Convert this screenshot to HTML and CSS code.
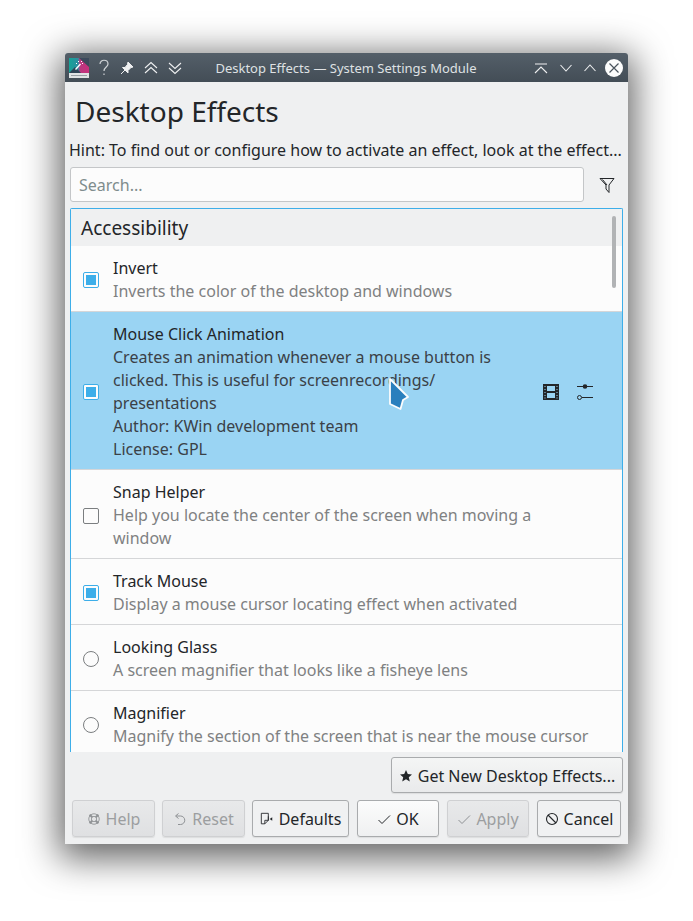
FILE: index.html
```html
<!DOCTYPE html>
<html lang="en">
<head>
<meta charset="utf-8">
<title>Desktop Effects — System Settings Module</title>
<link rel="stylesheet" href="styles.css">
</head>
<body>
<div class="window">
  <header class="titlebar">
    <svg class="app-icon" width="20" height="20" viewBox="0 0 20 20">
      <defs><linearGradient id="ag" x1="0" y1="0" x2="1" y2="0"><stop offset="0" stop-color="#17a397"/><stop offset=".45" stop-color="#2a8fa0"/><stop offset=".55" stop-color="#b9377f"/><stop offset="1" stop-color="#c9307c"/></linearGradient></defs>
      <rect width="20" height="15" fill="url(#ag)"/>
      <path d="M10 0H20V9Z" fill="#3c4a5c"/>
      <path d="M0 15L6 9L12 15Z" fill="#2f4456"/>
      <rect y="15" width="20" height="5" fill="#e1e3e5"/>
      <rect x="2" y="17" width="16" height="1" fill="#9aa0a6"/>
      <path d="M6 11L11 5.500L12 6.500L7 12Z" fill="#fff"/>
      <path d="M9 3h1v1H9zM12 3h1v1h-1zM13 5h1v1h-1zM7 5h1v1H7z" fill="#fff"/>
    </svg>
    <div class="tb-left">
      <svg class="ic-help" width="16" height="18" viewBox="0 0 16 18"><path d="M4 5c0-5 8-5 8 0 0 3-4 3-4 7M8 14.500v1.500" fill="none" stroke="#cfd3d6" stroke-width="1.200"/></svg>
      <svg width="14" height="14" viewBox="0 0 14 14"><path d="M8 1l5 5-2 .5-3 3 0 2.500L2.500 6.500 5 6.500l2.500-3zM5 9l-4 4" fill="#eff0f1" stroke="#eff0f1" stroke-width="1"/></svg>
      <svg width="14" height="14" viewBox="0 0 14 14"><path d="M1 7l6-5.500L13 7M1 12l6-5.500 6 5.500" fill="none" stroke="#eff0f1" stroke-width="1.100"/></svg>
      <svg width="14" height="14" viewBox="0 0 14 14"><path d="M1 2l6 5.500L13 2M1 7l6 5.500L13 7" fill="none" stroke="#eff0f1" stroke-width="1.100"/></svg>
    </div>
    <div class="tb-title">Desktop Effects — System Settings Module</div>
    <div class="tb-right">
      <svg width="14" height="14" viewBox="0 0 14 14"><path d="M1 3h12M1 12l6-6 6 6" fill="none" stroke="#eff0f1" stroke-width="1.100"/></svg>
      <svg width="14" height="14" viewBox="0 0 14 14"><path d="M1.500 4l5.500 6 5.500-6" fill="none" stroke="#eff0f1" stroke-width="1.100"/></svg>
      <svg width="14" height="14" viewBox="0 0 14 14"><path d="M1.500 10l5.500-6 5.500 6" fill="none" stroke="#eff0f1" stroke-width="1.100"/></svg>
      <svg class="ic-close" width="18" height="18" viewBox="0 0 18 18"><circle cx="9" cy="9" r="9" fill="#fcfcfc"/><path d="M4.500 4.500l9 9M13.500 4.500l-9 9" stroke="#4a545d" stroke-width="1.200"/></svg>
    </div>
  </header>

  <main class="content">
    <h1 class="heading">Desktop Effects</h1>
    <p class="hint">Hint: To find out or configure how to activate an effect, look at the effect...</p>
    <div class="search-row">
      <div class="search">Search...</div>
      <svg class="filter" width="16" height="16" viewBox="0 0 16 16"><path d="M1 1.500h14L10 8v7.500L7 12V8z M3.500 2.500L8 8" fill="none" stroke="#232629" stroke-width="1"/></svg>
    </div>

    <div class="list">
      <div class="scrollbar"></div>
      <div class="section">Accessibility</div>

      <div class="row">
        <span class="check on"></span>
        <div class="text"><div class="name">Invert</div><div class="desc">Inverts the color of the desktop and windows</div></div>
      </div>

      <div class="row selected">
        <span class="check on"></span>
        <div class="text">
          <div class="name">Mouse Click Animation</div>
          <div class="desc">Creates an animation whenever a mouse button is<br>clicked. This is useful for screenrecordings/<br>presentations<br>Author: KWin development team<br>License: GPL</div>
        </div>
        <div class="row-actions">
          <svg width="16" height="16" viewBox="0 0 16 16"><rect x="0" y="0" width="16" height="16" fill="#232629"/><rect x="4" y="2" width="8" height="5" fill="#9ad4f3"/><rect x="4" y="9" width="8" height="5" fill="#9ad4f3"/><path d="M1.500 2h1v1h-1zM1.500 5h1v1h-1zM1.500 8h1v1h-1zM1.500 11h1v1h-1zM1.500 13.500h1v1h-1zM13.500 2h1v1h-1zM13.500 5h1v1h-1zM13.500 8h1v1h-1zM13.500 11h1v1h-1zM13.500 13.500h1v1h-1z" fill="#9ad4f3"/></svg>
          <svg width="16" height="16" viewBox="0 0 16 16"><path d="M0 2.500h16M5 13.500h11" stroke="#232629"/><circle cx="8" cy="2.500" r="2.300" fill="#232629"/><circle cx="2.500" cy="13.500" r="2" fill="none" stroke="#232629"/></svg>
        </div>
      </div>

      <div class="row">
        <span class="check"></span>
        <div class="text"><div class="name">Snap Helper</div><div class="desc">Help you locate the center of the screen when moving a<br>window</div></div>
      </div>

      <div class="row">
        <span class="check on"></span>
        <div class="text"><div class="name">Track Mouse</div><div class="desc">Display a mouse cursor locating effect when activated</div></div>
      </div>

      <div class="row">
        <span class="radio"></span>
        <div class="text"><div class="name">Looking Glass</div><div class="desc">A screen magnifier that looks like a fisheye lens</div></div>
      </div>

      <div class="row">
        <span class="radio"></span>
        <div class="text"><div class="name">Magnifier</div><div class="desc">Magnify the section of the screen that is near the mouse cursor</div></div>
      </div>
    </div>

    <div class="get-new-row">
      <button class="btn get-new"><svg width="14" height="14" viewBox="0 0 14 14"><path d="M7 1l1.800 4 4.200.4-3.200 2.800 1 4.300L7 10.300 3.200 12.500l1-4.300L1 5.400 5.200 5z" fill="#232629"/></svg>Get New Desktop Effects...</button>
    </div>

    <div class="dialog-buttons">
      <button class="btn off b-help"><svg width="14" height="14" viewBox="0 0 16 16"><circle cx="8" cy="8" r="6" fill="none" stroke="#8e9194"/><circle cx="8" cy="8" r="3" fill="none" stroke="#8e9194"/><path d="M3 3l3 3M13 3l-3 3M3 13l3-3M13 13l-3-3" stroke="#8e9194" stroke-width="2.400"/></svg>Help</button>
      <button class="btn off b-reset"><svg width="14" height="14" viewBox="0 0 14 14"><path d="M5.500 1.500L2.500 4l3 2.500M3 4h4.500a3.800 3.800 0 0 1 0 8.500H5" fill="none" stroke="#8e9194"/></svg>Reset</button>
      <button class="btn b-defaults"><svg width="14" height="14" viewBox="0 0 16 16"><path d="M1.500 1.500h8v8l-4 4h-4zM9.500 5v4.500M5.500 13.500v-4h4" fill="none" stroke="#232629"/><path d="M11 8l3-2v4z" fill="#232629"/></svg>Defaults</button>
      <button class="btn b-ok"><svg width="14" height="14" viewBox="0 0 14 14"><path d="M1.500 8l3.500 3.500 8-8" fill="none" stroke="#232629"/></svg>OK</button>
      <button class="btn off b-apply"><svg width="14" height="14" viewBox="0 0 14 14"><path d="M1.500 8l3.500 3.500 8-8" fill="none" stroke="#8e9194"/></svg>Apply</button>
      <button class="btn b-cancel"><svg width="14" height="14" viewBox="0 0 14 14"><circle cx="7" cy="7" r="5.500" fill="none" stroke="#232629" stroke-width="1.100"/><path d="M3 3l8 8" stroke="#232629" stroke-width="1.100"/></svg>Cancel</button>
    </div>
  </main>

  <svg class="cursor" width="24" height="38" viewBox="0 0 24 38">
    <path d="M2 3L20 21L15 24L12.500 33L2 28Z" fill="#2a7fbd" stroke="#fcfcfc" stroke-width="1.800" stroke-linejoin="round"/>
  </svg>
</div>
</body>
</html>
```

FILE: styles.css
```css
* { box-sizing: border-box; }
html, body { margin: 0; padding: 0; background: #fff; }
body {
  width: 693px;
  height: 921px;
  padding: 53px 65px 77px;
  overflow: hidden;
  font-family: "Noto Sans", sans-serif;
  font-size: 16px;
  color: #232629;
}
.window {
  position: relative;
  width: 563px;
  height: 791px;
  display: flex;
  flex-direction: column;
  background: #eff0f1;
  border-radius: 3px 3px 0 0;
  box-shadow: 0 8px 36px 6px rgba(0,0,0,.62);
}
.titlebar {
  height: 29px;
  flex: none;
  display: flex;
  align-items: center;
  padding: 0 5px 0 4px;
  background: linear-gradient(#545f69, #434d56);
  border-radius: 3px 3px 0 0;
  color: #dfe1e3;
  font-size: 13px;
}
.app-icon { flex: none; }
.tb-left { display: flex; align-items: center; gap: 10px; margin-left: 7px; }
.ic-help { margin-right: -2px; }
.tb-title { flex: 1; text-align: center; white-space: nowrap; margin-left: -22px; }
.tb-right { display: flex; align-items: center; gap: 10px; margin-left: 2px; }
.tb-right svg:nth-child(1) { margin-right: 1px; }
.ic-close { margin-left: -2px; }
.content { flex: 1; display: flex; flex-direction: column; min-height: 0; padding: 0 5px 0 5px; }
.heading { margin: 11px 0 0 5px; font-size: 28px; font-weight: 400; line-height: 37px; height: 39px; }
.hint { margin: 0 0 0 -1px; font-size: 16px; line-height: 20px; white-space: nowrap; height: 35px; padding-top: 8px; }
.search-row { display: flex; align-items: center; height: 35px; flex: none; }
.search {
  width: 514px; height: 35px; flex: none;
  border: 1px solid #c4c6c8; border-radius: 3px; background: #fcfcfc;
  color: #7f8c8d; padding: 1px 8px 0; line-height: 33px; font-size: 16px;
}
.filter { margin-left: 15px; }
.list {
  position: relative;
  margin-top: 6px;
  width: 553px;
  height: 544px;
  flex: none;
  border: 1px solid #3daee9;
  border-bottom: 0;
  border-radius: 2px 2px 0 0;
  background: #fcfcfc;
  overflow: hidden;
}
.scrollbar { position: absolute; top: 7px; right: 6px; width: 4px; height: 72px; border-radius: 2px; background: #b1b3b5; z-index: 2; }
.section { height: 37px; background: #eff0f1; padding-left: 10px; font-size: 19px; line-height: 38px; }
.row {
  display: flex; align-items: center;
  padding: 11px 0 8px 12px;
  border-bottom: 1px solid #d5d6d8;
}
.row.selected { background: #9ad4f3; }
.check, .radio { flex: none; width: 16px; height: 16px; border: 1px solid #7b7e80; background: #fcfcfc; }
.check { border-radius: 2px; position: relative; }
.check.on { border-color: #3daee9; }
.check.on::after { content: ""; position: absolute; inset: 2px; background: #3daee9; }
.radio { border-radius: 50%; }
.text { margin-left: 14px; flex: 1; min-width: 0; font-size: 16px; line-height: 23px; }
.name { color: #232629; }
.desc { color: #7f8182; white-space: nowrap; }
.selected .desc { color: #3a4147; }
.row-actions { display: flex; gap: 18px; margin-right: 29px; align-items: center; }
.get-new-row { display: flex; justify-content: flex-end; margin-top: 5px; padding-right: 0; }
.btn {
  font: inherit; font-size: 16px; color: #232629;
  display: inline-flex; align-items: center; justify-content: center; gap: 5px;
  height: 37px; padding: 0;
  border: 1px solid #a9abad; border-radius: 3px;
  background: linear-gradient(#fcfcfc, #eff0f1);
  box-shadow: 0 1px 1px rgba(0,0,0,.08);
  white-space: nowrap;
}
.get-new { width: 232px; height: 36px; padding-top: 1px; background: linear-gradient(#f4f5f5, #e9eaeb); }
.dialog-buttons { display: flex; margin-top: 7px; padding-left: 2px; }
.off { color: #9c9ea0; border-color: #cfd0d2; background: linear-gradient(#e8e9ea, #dfe0e2); }
.b-help, .b-reset { width: 83px; }
.b-reset { margin-left: 7px; }
.b-defaults { width: 97px; margin-left: 7px; background: #f0f1f2; }
.b-ok { width: 82px; margin-left: 8px; }
.b-apply { width: 82px; margin-left: 8px; }
.b-cancel { width: 84px; margin-left: 8px; background: #f0f1f2; }
.cursor { position: absolute; left: 323px; top: 323px; }
```
